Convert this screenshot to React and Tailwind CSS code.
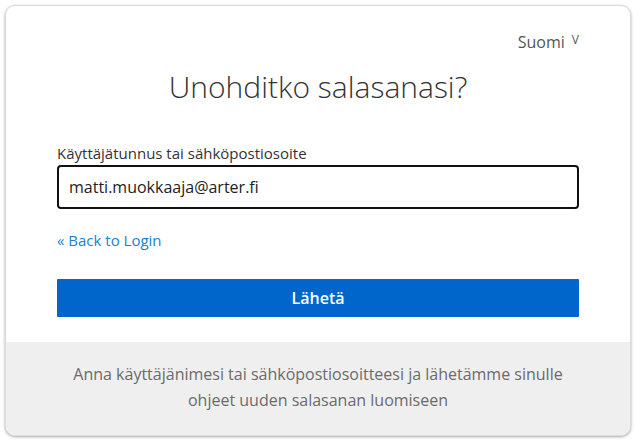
export default function App() {
  return (
    <div className="w-[643px] h-[444px] bg-white pt-[5px] pl-[5px]" style={{ fontFamily: '"Open Sans", "Liberation Sans", sans-serif' }}>
      <div className="w-[626px] h-[431px] rounded-[10px] border border-[#dcdcdc] bg-white shadow-[0_1px_3px_rgba(0,0,0,0.35)] overflow-hidden flex flex-col">
        <div className="flex-1 px-[51px] pt-[24px]">
          <div className="flex justify-end items-start h-[24px]">
            <span className="text-[16px] text-[#555] leading-[24px]">Suomi</span>
            <span className="text-[12px] text-[#555] leading-[18px] ml-[7px] mt-[1px]">V</span>
          </div>
          <h1 className="text-center text-[30px] font-light text-[#333] leading-[40px] mt-[13px]">Unohditko salasanasi?</h1>
          <div className="mt-[35px] text-[15px] text-[#333] leading-[22px]">Käyttäjätunnus tai sähköpostiosoite</div>
          <div className="mt-[1px] h-[44px] rounded-[4px] border-2 border-[#111] flex items-center px-[10px] text-[16px] text-[#222]">
            matti.muokkaaja@arter.fi
          </div>
          <div className="mt-[20px] text-[15px] text-[#1a7fd4] leading-[22px]">« Back to Login</div>
          <div className="mt-[28px] h-[38px] bg-[#0066cc] rounded-[1px] flex items-center justify-center text-white text-[16px] font-semibold">
            Lähetä
          </div>
        </div>
        <div className="h-[93px] bg-[#efefef] flex items-center justify-center text-center text-[16px] leading-[26px] text-[#6b6b6b] px-[40px] pb-[3px]">
          <p>Anna käyttäjänimesi tai sähköpostiosoitteesi ja lähetämme sinulle<br />ohjeet uuden salasanan luomiseen</p>
        </div>
      </div>
    </div>
  );
}
